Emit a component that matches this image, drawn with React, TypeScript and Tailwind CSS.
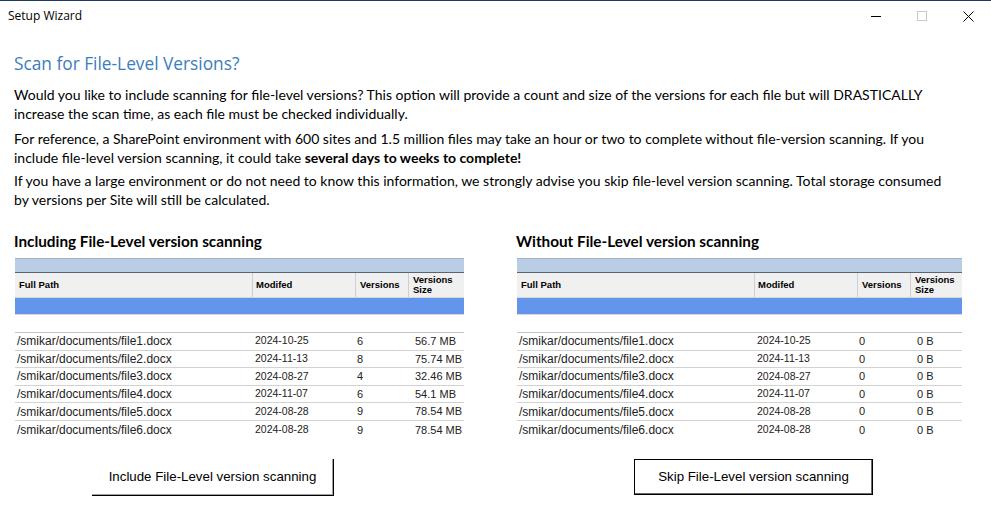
import React from 'react';

type Row = { path: string; date: string; versions: string; size: string };

const withVersions: Row[] = [
  { path: '/smikar/documents/file1.docx', date: '2024-10-25', versions: '6', size: '56.7 MB' },
  { path: '/smikar/documents/file2.docx', date: '2024-11-13', versions: '8', size: '75.74 MB' },
  { path: '/smikar/documents/file3.docx', date: '2024-08-27', versions: '4', size: '32.46 MB' },
  { path: '/smikar/documents/file4.docx', date: '2024-11-07', versions: '6', size: '54.1 MB' },
  { path: '/smikar/documents/file5.docx', date: '2024-08-28', versions: '9', size: '78.54 MB' },
  { path: '/smikar/documents/file6.docx', date: '2024-08-28', versions: '9', size: '78.54 MB' },
];

const withoutVersions: Row[] = withVersions.map((r) => ({ ...r, versions: '0', size: '0 B' }));

const VersionTable: React.FC<{ rows: Row[]; width: string }> = ({ rows, width }) => (
  <div className={`${width} font-['Liberation_Sans',Arial,sans-serif] text-[11px] text-[#222]`}>
    {/* top band */}
    <div className="h-[15px] bg-[#b9cde5] border-t border-[#9db3d2] border-b border-b-[#5c6470]" />
    {/* header */}
    <div className="flex h-[25px] bg-[#f0f0f0] border-b border-[#d6d6d6] text-[9.5px] font-bold text-black leading-[10px]">
      <div className="w-[238px] flex items-center pl-[4px] border-r border-[#cfcfcf]">Full Path</div>
      <div className="w-[103px] flex items-center pl-[3px] border-r border-[#cfcfcf]">Modifed</div>
      <div className="w-[53px] flex items-center pl-[4px] border-r border-[#cfcfcf]">Versions</div>
      <div className="flex-1 flex flex-col justify-center pl-[4px]">
        <span>Versions</span>
        <span>Size</span>
      </div>
    </div>
    {/* selected row */}
    <div className="h-[17px] bg-[#6495ed] border-b border-[#d8d8d8]" />
    {/* spacer */}
    <div className="h-[18px] border-b border-[#c4c4c4]" />
    {rows.map((r, i) => (
      <div
        key={r.path}
        className={`flex h-[17.6px] items-center ${i < rows.length - 1 ? 'border-b border-[#d2d2d2]' : ''}`}
      >
        <div className="w-[240px] pl-[2px] text-[12px]">{r.path}</div>
        <div className="w-[102px] text-[10.5px]">{r.date}</div>
        <div className="w-[58px]">{r.versions}</div>
        <div className="flex-1">{r.size}</div>
      </div>
    ))}
  </div>
);

export default function App() {
  return (
    <div className="w-[991px] h-[511px] bg-white overflow-hidden border-t border-[#1e3a5f] text-black">
      {/* Title bar */}
      <div className="flex items-center h-[30px] pl-[8px] font-['Open_Sans',sans-serif] text-[12px]">
        <span className="flex-1">Setup Wizard</span>
        <div className="flex items-center h-full">
          <div className="w-[46px] h-full flex items-center justify-center">
            <div className="w-[10px] h-px bg-black" />
          </div>
          <div className="w-[46px] h-full flex items-center justify-center">
            <div className="w-[10px] h-[10px] border border-[#c8c8c8]" />
          </div>
          <div className="w-[46px] h-full flex items-center justify-center">
            <svg width="11" height="11" viewBox="0 0 11 11" className="stroke-black" strokeWidth="1">
              <path d="M0.5 0.5 L10.5 10.5 M10.5 0.5 L0.5 10.5" />
            </svg>
          </div>
        </div>
      </div>

      <div className="px-[14px]">
        <h1 className="mt-[23px] font-['Open_Sans',sans-serif] text-[17.3px] leading-[20px] text-[#3b7dbd]">
          Scan for File-Level Versions?
        </h1>

        <div className="font-['Lato',sans-serif] text-[14px] leading-[19px] text-black whitespace-nowrap">
          <p className="mt-[11px]">
            Would you like to include scanning for file-level versions? This option will provide a count and size of the versions for each file but will DRASTICALLY
            <br />
            increase the scan time, as each file must be checked individually.
          </p>
          <p className="mt-[6px]">
            For reference, a SharePoint environment with 600 sites and 1.5 million files may take an hour or two to complete without file-version scanning. If you
            <br />
            include file-level version scanning, it could take <b className="font-bold">several days to weeks to complete!</b>
          </p>
          <p className="mt-[4px]">
            If you have a large environment or do not need to know this information, we strongly advise you skip file-level version scanning. Total storage consumed
            <br />
            by versions per Site will still be calculated.
          </p>
        </div>

        <div className="flex mt-[24px]">
          <div className="w-[502px]">
            <h2 className="font-['Lato',sans-serif] font-bold text-[15.3px] leading-[16px]">
              Including File-Level version scanning
            </h2>
            <div className="mt-[9px] pl-px">
              <VersionTable rows={withVersions} width="w-[449px]" />
            </div>
            <div className="mt-[20px] pl-[78px]">
              <button className="w-[242px] h-[37px] bg-white border-r border-b border-black shadow-[inset_-1px_-1px_0_#a0a0a0] font-['Liberation_Sans',Arial,sans-serif] text-[13.3px] text-black">
                Include File-Level version scanning
              </button>
            </div>
          </div>
          <div className="flex-1">
            <h2 className="font-['Lato',sans-serif] font-bold text-[15.3px] leading-[16px]">
              Without File-Level version scanning
            </h2>
            <div className="mt-[9px] pl-px">
              <VersionTable rows={withoutVersions} width="w-[445px]" />
            </div>
            <div className="mt-[20px] pl-[118px]">
              <button className="w-[239px] h-[36px] bg-white border border-black shadow-[inset_-1px_-1px_0_#696969] font-['Liberation_Sans',Arial,sans-serif] text-[13.3px] text-black">
                Skip File-Level version scanning
              </button>
            </div>
          </div>
        </div>
      </div>
    </div>
  );
}
